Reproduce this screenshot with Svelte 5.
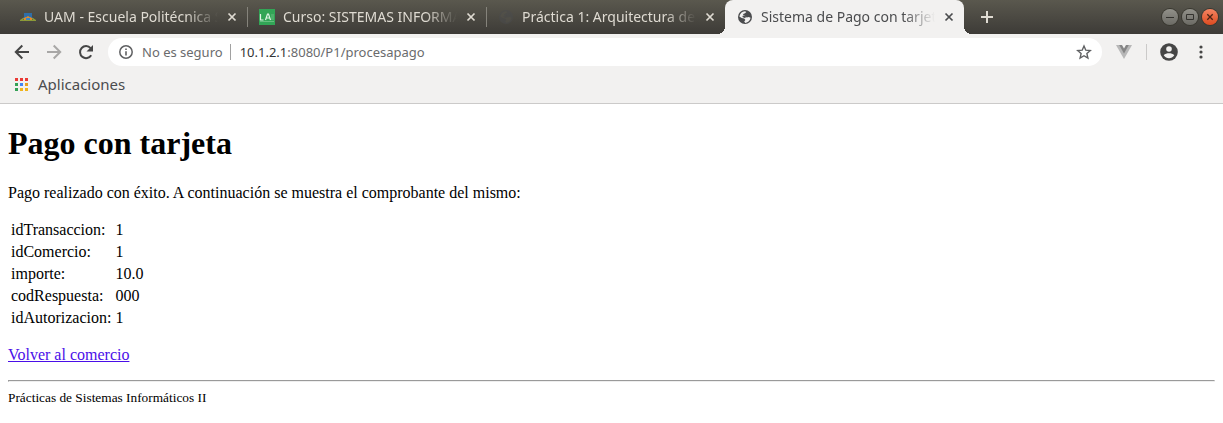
<script>
  const tabs = [
    { title: 'UAM - Escuela Politécnica Superior', icon: 'uam' },
    { title: 'Curso: SISTEMAS INFORMÁTICOS II', icon: 'ia' },
    { title: 'Práctica 1: Arquitectura de JAVA EE', icon: 'dark' },
    { title: 'Sistema de Pago con tarjeta', icon: 'globe', active: true }
  ];
  const rows = [
    ['idTransaccion:', '1'],
    ['idComercio:', '1'],
    ['importe:', '10.0'],
    ['codRespuesta:', '000'],
    ['idAutorizacion:', '1']
  ];
  const dots = ['#ea3a35', '#ea3a35', '#ea3a35', '#35a156', '#4285f4', '#e8a020', '#35a156', '#f0b41c', '#f0b41c'];
</script>

<header class="browser">
  <div class="strip">
    <nav class="tabs">
      {#each tabs as tab}
        <div class="tab" class:active={tab.active}>
          <svg class="favicon" viewBox="0 0 16 16" aria-hidden="true">
            {#if tab.icon === 'uam'}
              <path d="M4 4h8v4l2 2H2l2-2z" fill="#2f6ea8" />
              <path d="M5 9l3-2 3 2v2H9V9H7v2H5z" fill="#e28b2b" />
              <path d="M0 11l3-2h2l-2 2h10l-2-2h2l3 2v1H0z" fill="#8c9a38" />
              <path d="M5 9h6v2H5z" fill="#3b86c4" />
              <path d="M4 9l2-1v3H4zM10 8l2 1v2h-2z" fill="#e28b2b" />
            {:else if tab.icon === 'ia'}
              <rect width="16" height="16" fill="#32a556" />
              <path d="M1.500 5v6h3M6.500 11l2-6h1l2 6M7.500 9h3" fill="none" stroke="#e0f4e5" stroke-width="1.200" />
              <path d="M12 6h3M12 8h3M12 10h3" stroke="#68bd80" />
              <path d="M1 12.500h14" stroke="#8bcf9e" stroke-width=".6" />
            {:else}
              <g class:faint={tab.icon === 'dark'}>
                <circle cx="8" cy="8" r="7" fill="#4b4c4e" />
                <path d="M2.300 7.500C3 4.500 5 2.600 8 2.300L9.300 3 8 4.300 6.200 5v1.300L8.400 7l1.300 1.400 2-.4 1.900.8c-.5 2.800-2.500 4.800-5.200 5.100L7.200 12.500 8.400 11 7.200 9.600 4.700 8.900z" fill="#f2f1f0" />
                <path d="M5.600 6.700l3 .3.700 1.200-1.800.7-2-1zM10 4.800l2-.8 1 2.700-2 .1z" fill="#4b4c4e" />
              </g>
            {/if}
          </svg>
          <span class="title">{tab.title}</span>
          <button class="close" aria-label="Cerrar pestaña">
            <svg viewBox="0 0 10 10"><path d="M1.500 1.500l7 7m0-7l-7 7" fill="none" stroke="currentColor" stroke-width="1.700" /></svg>
          </button>
        </div>
      {/each}
    </nav>
    <button class="new" aria-label="Nueva pestaña">
      <svg viewBox="0 0 12 12"><path d="M6 0v12M0 6h12" stroke="currentColor" stroke-width="2" /></svg>
    </button>
    <div class="window">
      <button aria-label="Minimizar"><svg viewBox="0 0 16 16"><path d="M4 8.500h8" stroke="#33322e" /></svg></button>
      <button aria-label="Maximizar"><svg viewBox="0 0 16 16"><path d="M4.500 5.500h7v5h-7z" fill="none" stroke="#33322e" /></svg></button>
      <button class="quit" aria-label="Cerrar"><svg viewBox="0 0 16 16"><path d="M5.300 5.300l5.400 5.400m0-5.400l-5.400 5.400" stroke="#4a2416" stroke-width="1.300" /></svg></button>
    </div>
  </div>

  <div class="toolbar">
    <button aria-label="Atrás"><svg viewBox="0 0 16 16"><path d="M15 8H2M8.300 1.500L1.800 8l6.500 6.500" fill="none" stroke="#464646" stroke-width="2" /></svg></button>
    <button aria-label="Adelante"><svg viewBox="0 0 16 16"><path d="M1 8h13M7.700 1.500L14.200 8l-6.500 6.500" fill="none" stroke="#a8a7a6" stroke-width="2" /></svg></button>
    <button class="reload" aria-label="Recargar"><svg viewBox="0 0 16 16"><path d="M13.200 11.200A6 6 0 1 1 12.600 4.200" fill="none" stroke="#464646" stroke-width="2" /><path d="M15 1v6.500H8.500z" fill="#464646" /></svg></button>
    <div class="omnibox">
      <svg class="info" viewBox="0 0 14 14" aria-hidden="true"><circle cx="7" cy="7" r="6.200" fill="none" stroke="#5f6062" stroke-width="1.500" /><path d="M7 6.200v4.300M7 3.500v1.600" stroke="#5f6062" stroke-width="1.600" /></svg>
      <span class="secure">No es seguro</span>
      <span class="rule"></span>
      <span class="url"><b>10.1.2.1</b>:8080/P1/procesapago</span>
      <button class="star" aria-label="Añadir a marcadores"><svg viewBox="0 0 16 16"><path d="M8 2l1.800 4.200 4.500.4-3.400 3 1 4.400L8 11.700 4.100 14l1-4.400-3.400-3 4.500-.4z" fill="none" stroke="#5f6062" stroke-width="1.400" /></svg></button>
    </div>
    <button class="vue" aria-label="Vue"><svg viewBox="0 0 16 16"><path d="M0 1h16L8 15z" fill="#b8b8b8" /><path d="M3.200 1h9.600L8 9.500z" fill="#858585" /><path d="M6 1h4L8 4.500z" fill="#f2f1f0" /></svg></button>
    <span class="rule light"></span>
    <button class="user" aria-label="Perfil"><svg viewBox="0 0 18 18"><circle cx="9" cy="9" r="8.800" fill="#464646" /><circle cx="9" cy="6" r="2.800" fill="#f2f1f0" /><path d="M3.700 12.300C5 10.500 7 10.200 9 10.200s4 .3 5.300 2.100C13 14.400 11 15.200 9 15.200s-4-.8-5.300-2.900z" fill="#f2f1f0" /></svg></button>
    <button class="menu" aria-label="Menú"><svg viewBox="0 0 16 16" fill="#464646"><circle cx="8" cy="3" r="1.600" /><circle cx="8" cy="8" r="1.600" /><circle cx="8" cy="13" r="1.600" /></svg></button>
  </div>

  <div class="bookmarks">
    <button>
      <svg viewBox="0 0 13 13" aria-hidden="true">
        {#each dots as color, i}
          <rect x={(i % 3) * 5} y={Math.floor(i / 3) * 5} width="3" height="3" fill={color} />
        {/each}
      </svg>
      Aplicaciones
    </button>
  </div>
</header>

<main>
  <h1>Pago con tarjeta</h1>
  <p>Pago realizado con éxito. A continuación se muestra el comprobante del mismo:</p>
  <table>
    <tbody>
      {#each rows as [name, value]}
        <tr><th scope="row">{name}</th><td>{value}</td></tr>
      {/each}
    </tbody>
  </table>
  <p><a href="#comercio">Volver al comercio</a></p>
  <hr />
  <footer>Prácticas de Sistemas Informáticos II</footer>
</main>

<style>
  :global(body) { margin: 0; background: #fff; }
  button {
    display: flex;
    align-items: center;
    justify-content: center;
    flex: none;
    margin: 0;
    padding: 0;
    border: 0;
    background: none;
    color: inherit;
    font: inherit;
  }
  svg { display: block; flex: none; }
  .browser {
    border-bottom: 1px solid #cbcac9;
    background: #f2f1f0;
    color: #4b4c4e;
    font: 15px/20px "Noto Sans", "Open Sans", sans-serif;
  }
  .strip {
    display: flex;
    align-items: center;
    height: 34px;
    padding: 0 5px 0 8px;
    background: linear-gradient(#5a584e, #3d3b37);
    color: #dfdbd2;
  }
  .tabs { display: flex; flex: 0 1 956px; min-width: 0; height: 34px; font-size: 14px; }
  .tab {
    position: relative;
    display: flex;
    flex: 1 1 0;
    align-items: center;
    box-sizing: border-box;
    min-width: 0;
    padding: 0 10px 0 12px;
  }
  .tab:nth-child(-n+2)::after {
    content: "";
    position: absolute;
    right: -1px;
    top: 7px;
    width: 1px;
    height: 20px;
    background: #85837b;
  }
  .active { border-radius: 8px 8px 0 0; background: #f2f1f0; color: #4b4c4e; }
  .active::before, .active::after {
    content: "";
    position: absolute;
    bottom: 0;
    width: 8px;
    height: 8px;
  }
  .active::before { right: 100%; background: radial-gradient(circle at 0 0, transparent 8px, #f2f1f0 8px); }
  .active::after { left: 100%; background: radial-gradient(circle at 100% 0, transparent 8px, #f2f1f0 8px); }
  .favicon { width: 16px; height: 16px; margin-right: 8px; }
  .faint { opacity: 0.5; }
  .faint path:first-of-type { fill: #55544d; }
  .title {
    flex: 1;
    overflow: hidden;
    white-space: nowrap;
    -webkit-mask-image: linear-gradient(to left, transparent, #000 32px);
    mask-image: linear-gradient(to left, transparent, #000 32px);
  }
  .close { width: 10px; height: 20px; margin-left: 9px; }
  .close svg { width: 10px; height: 10px; }
  .new { width: 28px; height: 28px; margin-left: 9px; }
  .new svg { width: 12px; height: 12px; }
  .window { display: flex; gap: 4px; margin-left: auto; }
  .window button {
    box-sizing: border-box;
    width: 16px;
    height: 16px;
    border-radius: 50%;
    background: linear-gradient(#92918a, #6b6a64);
    box-shadow: 0 0 0 1px #38372f;
  }
  .window .quit { background: linear-gradient(#f58462, #dd4b20); }
  .window svg { width: 16px; height: 16px; }
  .toolbar { display: flex; align-items: center; height: 36px; padding: 0 14px; }
  .toolbar > button { width: 16px; height: 28px; margin-right: 16px; }
  .toolbar > .reload { margin-right: 14px; }
  .toolbar > button svg { width: 16px; height: 16px; }
  .omnibox {
    display: flex;
    flex: 1;
    align-items: center;
    min-width: 0;
    height: 28px;
    margin-right: 14px;
    padding: 0 10px 0 11px;
    border-radius: 14px;
    background: #fff;
    color: #6a6b6d;
    font-size: 13px;
    white-space: nowrap;
  }
  .info { width: 14px; height: 14px; margin-right: 9px; }
  .rule { width: 1px; height: 16px; margin: 0 9px 0 7px; background: #a1a1a1; }
  .url b { color: #333435; font-weight: 400; }
  .star { margin-left: auto; }
  .star svg { width: 16px; height: 16px; }
  .toolbar .vue { margin-right: 7px; }
  .light { margin: 0 13px 0 7px; background: #cbcac9; }
  .toolbar .user { width: 18px; }
  .toolbar .user svg { width: 18px; height: 18px; }
  .toolbar .user { margin-right: 15px; }
  .toolbar .menu { margin-right: 0; }
  .bookmarks { display: flex; height: 33px; padding: 0 15px; }
  .bookmarks button { gap: 10px; height: 28px; }
  .bookmarks svg { width: 13px; height: 13px; }
  main { padding: 21px 8px 8px; color: #000; font: 16px/18px "Liberation Serif", "Times New Roman", serif; }
  h1 { margin: 0 0 22px; font-size: 32px; line-height: 37px; }
  p { margin: 16px 0; }
  table { border-spacing: 2px; }
  th, td { padding: 1px; font-weight: 400; text-align: left; }
  a { color: #4a0ee8; }
  hr { height: 0; margin: 16px 0 8px; border: 1px solid; border-color: #9a9a9a #eee #eee #9a9a9a; }
  footer { font-size: smaller; line-height: 16px; }
</style>
